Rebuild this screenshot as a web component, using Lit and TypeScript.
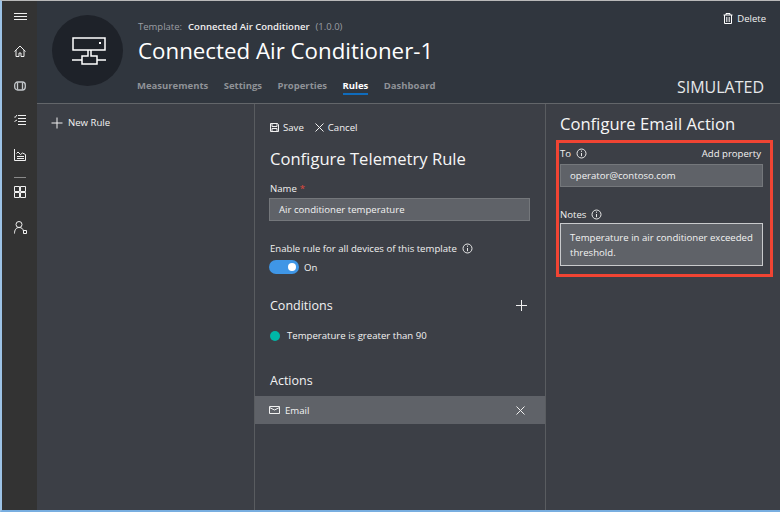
import { LitElement, css, html, svg } from 'lit';
import { customElement } from 'lit/decorators.js';

const info = html`<svg class="info" width="11" height="11" viewBox="0 0 11 11" fill="none" stroke="#e8e8e8" stroke-width="1"><circle cx="5.5" cy="5.5" r="4.5"/><path d="M5.5 5v3.2M5.5 2.6v1.2"/></svg>`;

const railIcons = [
  svg`<path d="M.5 6.500 6 1l5.500 5.500M2 5v6.500h3V8h2v3.500h3V5"/>`,
  svg`<rect x=".7" y="2" width="10.600" height="8" rx="3" stroke="#c4c8cc" stroke-width="1.300"/><path d="M3.500 2.500v7M8.500 2.500v7" stroke="#c4c8cc" stroke-width="1.300"/>`,
  svg`<path d="M4 1.500h8M4 4.500h8M4 7.500h8M4 10.500h8M0 2.500l1 1 2-2.500M.5 7.500l2.500-1.500"/>`,
  svg`<path d="M.5 0v11.500h11V5.500l-3-1.500-2 1.500L4 3 2.500 4.500M3 9.500h7M3 7.500h7"/>`,
];

@customElement('app-root')
export class AppRoot extends LitElement {
  static styles = css`
    :host {
      display: block;
      width: 780px;
      height: 512px;
      overflow: hidden;
      font-family: 'Open Sans', 'Noto Sans', sans-serif;
      color: #f2f2f2;
      font-size: 10px;
    }

    .frame {
      display: flex;
      box-sizing: border-box;
      height: 512px;
      background: #3c3f46;
      border-left: 2px solid #9dc3e6;
      border-top: 1px solid #b9b9b9;
      border-bottom: 2px solid #78aee0;
    }

    .rail {
      width: 35px;
      flex: none;
      background: #333333;
      display: flex;
      flex-direction: column;
      align-items: center;
      padding-left: 1px;
      box-sizing: border-box;
    }

    .rail svg {
      display: block;
      fill: none;
      stroke: #f0f0f0;
      stroke-width: 1;
    }

    .burger {
      margin-top: 12px;
      margin-bottom: 18px;
    }

    .rail-item {
      height: 24px;
      margin-bottom: 10.7px;
      display: flex;
      align-items: center;
      justify-content: center;
      flex: none;
    }

    .rail-sep {
      width: 12px;
      height: 1px;
      background: #8a8a8a;
      margin: -1px 0 2px;
    }

    .rail-item.grid {
      margin-bottom: 12px;
    }

    .main {
      flex: 1;
      min-width: 0;
      display: flex;
      flex-direction: column;
    }

    .header {
      height: 103px;
      flex: none;
      box-sizing: border-box;
      background: #30363e;
      border-bottom: 1px solid #63666a;
      display: flex;
      padding: 14px 14px 0 15px;
    }

    .avatar {
      width: 71px;
      height: 71px;
      flex: none;
      border-radius: 50%;
      background: #1e2229;
      display: flex;
      align-items: center;
      justify-content: center;
      margin-right: 15px;
    }

    .avatar svg {
      margin-left: 3px;
    }

    .head-mid {
      flex: 1;
      min-width: 0;
    }

    .template {
      display: flex;
      gap: 6px;
      font-size: 9.5px;
      line-height: 13px;
      margin-top: 5px;
      color: #9b9ea3;
    }

    .template b {
      font-weight: 600;
      color: #f0f0f0;
    }

    h1 {
      margin: 2px 0 0;
      font-size: 22.3px;
      line-height: 32px;
      font-weight: 400;
      color: #ffffff;
    }

    .tabs {
      display: flex;
      gap: 15.5px;
      margin-top: 12px;
      margin-left: -1px;
      font-size: 9.5px;
      font-weight: 700;
      color: #8f9297;
    }

    .tab {
      line-height: 13px;
      padding-bottom: 1px;
      border-bottom: 2px solid transparent;
    }

    .tab.on {
      color: #ffffff;
      border-bottom-color: #0f6cbd;
    }

    .head-right {
      display: flex;
      flex-direction: column;
      align-items: flex-end;
      justify-content: space-between;
      height: 83px;
    }

    .delete {
      display: flex;
      align-items: center;
      gap: 4px;
      font-size: 9.5px;
      font-weight: 500;
      line-height: 13px;
      margin-top: -3px;
    }

    .simulated {
      font-size: 16px;
      line-height: 22px;
      color: #e6e8ea;
      margin-right: 2px;
    }

    .body {
      flex: 1;
      min-height: 0;
      display: flex;
    }

    .col-left {
      width: 217px;
      flex: none;
      box-sizing: border-box;
      padding: 12px 14px;
    }

    .col-mid {
      width: 292px;
      flex: none;
      box-sizing: border-box;
      border-left: 1px solid #595c60;
      border-right: 1px solid #595c60;
    }

    .col-right {
      flex: 1;
      min-width: 0;
      padding: 9px 8px 0 14px;
    }

    .cmd {
      display: flex;
      align-items: center;
      gap: 5px;
      font-size: 9.6px;
      font-weight: 500;
      line-height: 13px;
    }

    .cmds {
      display: flex;
      gap: 11px;
      padding: 17px 0 0 15px;
    }

    .cmds .cmd {
      gap: 4px;
    }

    .pad {
      padding: 0 15px;
    }

    h2 {
      margin: 0;
      font-size: 16.6px;
      line-height: 22px;
      font-weight: 400;
      color: #f6f6f6;
    }

    .rule-title {
      margin-top: 14px;
    }

    .label {
      display: flex;
      align-items: center;
      gap: 5px;
      font-size: 9.6px;
      font-weight: 500;
      line-height: 13px;
      color: #f0f0f0;
    }

    .req {
      color: #e0493d;
      margin-left: -2px;
    }

    .field {
      box-sizing: border-box;
      background: #5f6268;
      border: 1px solid #74777b;
      font-size: 9.6px;
      font-weight: 500;
      color: #f2f2f2;
      padding: 0 9px;
      line-height: 21px;
      height: 23px;
    }

    .name-label {
      margin-top: 12px;
      margin-bottom: 3px;
    }

    .name-field {
      margin-left: -1px;
    }

    .enable {
      margin-top: 21px;
    }

    .toggle-row {
      display: flex;
      align-items: center;
      gap: 5px;
      margin-top: 5px;
      font-size: 9.6px;
      font-weight: 500;
    }

    .toggle {
      box-sizing: border-box;
      width: 30px;
      height: 14px;
      margin-left: -1px;
      border-radius: 7px;
      background: #3f96e6;
      display: flex;
      justify-content: flex-end;
      align-items: center;
      padding-right: 3px;
    }

    .toggle i {
      display: block;
      width: 8px;
      height: 8px;
      border-radius: 50%;
      background: #ffffff;
    }

    .section {
      display: flex;
      align-items: center;
      justify-content: space-between;
    }

    .conditions {
      margin-top: 23px;
    }

    .conditions svg {
      margin: -1px 3px 0 0;
    }

    .conditions h3,
    .actions h3 {
      margin: 0;
      font-size: 12.5px;
      line-height: 18px;
      font-weight: 400;
    }

    .cond {
      display: flex;
      align-items: center;
      gap: 7px;
      margin-top: 14px;
      font-size: 9.6px;
      font-weight: 500;
      line-height: 13px;
    }

    .dot {
      width: 10px;
      height: 10px;
      border-radius: 50%;
      background: #00b7a8;
    }

    .actions {
      margin-top: 29px;
      padding-left: 15px;
      height: 20px;
    }

    .email {
      margin-top: 5px;
      height: 28px;
      background: #5f6268;
      display: flex;
      align-items: center;
      justify-content: space-between;
      padding: 0 20px 0 14px;
      font-size: 9.6px;
      font-weight: 500;
    }

    .email span {
      display: flex;
      align-items: center;
      gap: 5px;
    }

    .callout {
      box-sizing: border-box;
      width: 217px;
      height: 137px;
      margin: 5px 0 0 -4px;
      border: 3px solid #f04433;
      padding: 4px 7px 0 1px;
    }

    .to-row {
      display: flex;
      justify-content: space-between;
      align-items: center;
      margin-bottom: 4px;
      padding-right: 2px;
    }

    .notes-label {
      margin-top: 21px;
      margin-bottom: 2px;
    }

    .notes {
      height: 43px;
      border-color: #c9cacc;
      line-height: 15px;
      padding: 6px 9px;
    }
  `;

  render() {
    return html`
      <div class="frame">
        <nav class="rail">
          <svg class="burger" width="13" height="8" viewBox="0 0 13 8"><path d="M0 .5h13M0 3.500h13M0 6.500h13"/></svg>
          ${railIcons.map(
            (p) => html`<div class="rail-item"><svg width="12" height="12" viewBox="0 0 12 12">${p}</svg></div>`,
          )}
          <div class="rail-sep"></div>
          <div class="rail-item grid">
            <svg width="12" height="12" viewBox="0 0 12 12"><path d="M.5.500h5v5h-5zM6.500.500h5v5h-5zM.5 6.500h5v5h-5zM6.500 6.500h5v5h-5z"/></svg>
          </div>
          <div class="rail-item">
            <svg width="13" height="13" viewBox="0 0 13 13"><circle cx="5" cy="3.500" r="3"/><path d="M.5 12.500c0-3.500 1.500-6 4.500-6s4 1.500 4.500 3.500M9.500 9.500h3v3h-3z"/></svg>
          </div>
        </nav>
        <div class="main">
          <header class="header">
            <div class="avatar">
              <svg width="34" height="28" viewBox="0 0 34 28" fill="none" stroke="#fff" stroke-width="1.500">
                <path d="M1 1h32v12H1zM16 13v6h-6v8h15v-8h-6v-6M0 23h10M25 23h9"/>
                <path d="M27 6h2" stroke-width="2"/>
              </svg>
            </div>
            <div class="head-mid">
              <div class="template">
                <span>Template:</span><b>Connected Air Conditioner</b><span>(1.0.0)</span>
              </div>
              <h1>Connected Air Conditioner-1</h1>
              <div class="tabs">
                <span class="tab">Measurements</span>
                <span class="tab">Settings</span>
                <span class="tab">Properties</span>
                <span class="tab on">Rules</span>
                <span class="tab">Dashboard</span>
              </div>
            </div>
            <div class="head-right">
              <div class="delete">
                <svg width="10" height="11" viewBox="0 0 10 11" fill="none" stroke="#fff"><path d="M0.500 2h9M3 2V.5h4V2M1.500 2v8.500h7V2M3.800 4v5M6.200 4v5"/></svg>
                Delete
              </div>
              <div class="simulated">SIMULATED</div>
            </div>
          </header>
          <div class="body">
            <section class="col-left">
              <div class="cmd">
                <svg width="12" height="12" viewBox="0 0 12 12" stroke="#f0f0f0"><path d="M6 .5v11M.5 6h11"/></svg>
                New Rule
              </div>
            </section>
            <section class="col-mid">
              <div class="cmds">
                <div class="cmd">
                  <svg width="9" height="9" viewBox="0 0 9 9" fill="none" stroke="#f0f0f0"><path d="M.5.500h7l1 1v7h-8zM2 .5v3h5v-3M2 8.500V5.500h5v3"/></svg>
                  Save
                </div>
                <div class="cmd">
                  <svg width="9" height="9" viewBox="0 0 9 9" stroke="#f0f0f0"><path d="M.5.500l8 8M8.500.500l-8 8"/></svg>
                  Cancel
                </div>
              </div>
              <div class="pad">
                <h2 class="rule-title">Configure Telemetry Rule</h2>
                <div class="label name-label">Name <span class="req">*</span></div>
                <div class="field name-field">Air conditioner temperature</div>
                <div class="label enable">Enable rule for all devices of this template ${info}</div>
                <div class="toggle-row"><div class="toggle"><i></i></div>On</div>
                <div class="section conditions">
                  <h3>Conditions</h3>
                  <svg width="11" height="11" viewBox="0 0 11 11" stroke="#f0f0f0"><path d="M5.500 0v11M0 5.500h11"/></svg>
                </div>
                <div class="cond"><span class="dot"></span>Temperature is greater than 90</div>
              </div>
              <div class="section actions"><h3>Actions</h3></div>
              <div class="email">
                <span>
                  <svg width="11" height="8" viewBox="0 0 11 8" fill="none" stroke="#f0f0f0"><path d="M.5.500h10v7H.500zM.5 1.500l5 2.500 5-2.500"/></svg>
                  Email
                </span>
                <svg width="9" height="9" viewBox="0 0 9 9" stroke="#f0f0f0"><path d="M.5.500l8 8M8.500.500l-8 8"/></svg>
              </div>
            </section>
            <section class="col-right">
              <h2>Configure Email Action</h2>
              <div class="callout">
                <div class="to-row">
                  <div class="label">To ${info}</div>
                  <div class="cmd">Add property</div>
                </div>
                <div class="field">operator@contoso.com</div>
                <div class="label notes-label">Notes ${info}</div>
                <div class="field notes">Temperature in air conditioner exceeded threshold.</div>
              </div>
            </section>
          </div>
        </div>
      </div>
    `;
  }
}
